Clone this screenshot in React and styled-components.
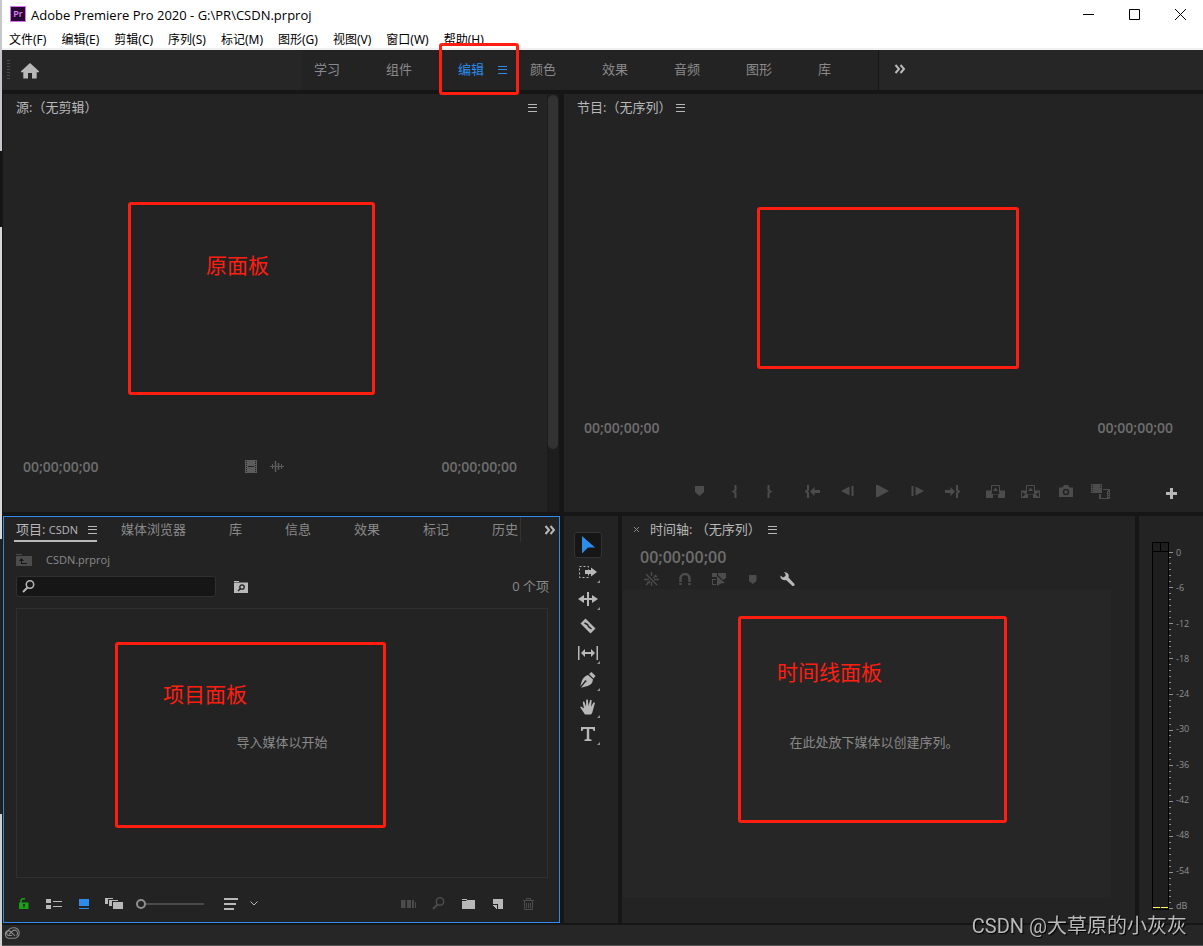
import React from "react";
import styled, { createGlobalStyle, css } from "styled-components";

const c = {
  panel: "#232323",
  seam: "#161616",
  body: "#262626",
  bright: "#b8b8b8",
  mid: "#8a8a8a",
  dim: "#4c4c4c",
  blue: "#2d8ceb",
  red: "#ff1e10",
};

const GlobalStyle = createGlobalStyle`
  * { box-sizing: border-box; }
  body { margin: 0; background: ${c.seam}; font: 13px/16px "Open Sans", "Noto Sans CJK SC", sans-serif; color: ${c.bright}; }
  button { appearance: none; border: 0; padding: 0; margin: 0; background: none; font: inherit; color: inherit; cursor: pointer; }
  svg { display: block; flex: none; }
  h1, h2, p { margin: 0; font-size: inherit; font-weight: inherit; }
`;

/* ---------- window frame ---------- */

const Desktop = styled.div`
  display: flex;
  min-height: 100vh;
`;
const DesktopEdge = styled.div`
  width: 2px;
  flex: none;
  background: linear-gradient(#c4c8cd 0 16%, #141414 16% 24%, #d8d8d8 24% 57%, #202020 57% 86%, #cfcfcf 86%);
`;
const Window = styled.div`
  flex: 1;
  min-width: 0;
  display: flex;
  flex-direction: column;
  background: ${c.seam};
  border-bottom: 1px solid #555;
`;
const TitleBar = styled.header`
  display: flex;
  align-items: center;
  height: 29px;
  padding-left: 8px;
  background: #fff;
  color: #000;
`;
const AppBadge = styled.span`
  width: 16px;
  height: 16px;
  margin: 0 5px 2px 0;
  background: #2a0634;
  border: 1px solid #d873f0;
  color: #e48bf8;
  font-size: 9px;
  font-weight: 600;
  line-height: 13px;
  text-align: center;
`;
const Title = styled.h1`
  flex: 1;
  font-size: 13px;
`;
const WindowButton = styled.button`
  width: 46px;
  height: 29px;
  display: grid;
  place-items: center;
`;
const MenuBar = styled.nav`
  display: flex;
  gap: 15px;
  height: 21px;
  padding: 2px 0 0 7px;
  background: #fff;
  border-bottom: 2px solid #f0f0f0;
  color: #000;
  font-family: "Noto Sans", "Noto Sans CJK SC", sans-serif;
  font-size: 12px;
`;
const MenuItem = styled.button`
  white-space: nowrap;
`;

/* ---------- workspace bar ---------- */

const WorkspaceBar = styled.nav`
  display: flex;
  height: 40px;
  margin-bottom: 4px;
  background: #262626;
`;
const Grip = styled.span`
  width: 3px;
  height: 19px;
  margin: 10px 10px 0 5px;
  background: repeating-linear-gradient(#4a4a4a 0 1px, transparent 1px 3px);
`;
const HomeButton = styled.button`
  width: 20px;
  display: grid;
  place-items: center;
  padding-top: 2px;
`;
const WorkspaceTabs = styled.div`
  display: flex;
  margin-left: 262px;
  padding-left: 12px;
  background: ${c.panel};
  border-right: 1px solid ${c.seam};
`;
const WorkspaceTab = styled.button`
  position: relative;
  display: flex;
  align-items: center;
  gap: 14px;
  width: 72px;
  padding-bottom: 3px;
  color: ${(p) => (p.$active ? c.blue : c.mid)};
  & > svg { margin-top: 2px; }
  &:last-child { width: 60px; }
`;
const OverflowButton = styled.button`
  width: 42px;
  display: grid;
  place-items: center;
  color: ${c.bright};
  padding-bottom: 2px;
`;

/* ---------- panels ---------- */

const Panels = styled.main`
  flex: 1;
  display: grid;
  grid-template-columns: minmax(0, 557fr) minmax(0, 639fr);
  grid-template-rows: minmax(418px, 418fr) minmax(407px, 407fr);
  gap: 4px;
  padding: 0 0 2px 1px;
`;
const Panel = styled.section`
  position: relative;
  display: flex;
  flex-direction: column;
  min-width: 0;
  background: ${c.panel};
  ${(p) => p.$focused && css`border: 1px solid ${c.blue};`}
`;
const ScrollFrame = styled.div`
  display: flex;
  margin-right: 1px;
`;
const SourcePanel = styled(Panel)`
  flex: 1;
`;
const ScrollTrack = styled.div`
  width: 12px;
  padding: 1px;
  background: #1d1d1d;
`;
const ScrollThumb = styled.div`
  height: 85%;
  border-radius: 5px;
  background: #323232;
`;
const PanelHeader = styled.header`
  display: flex;
  align-items: center;
  justify-content: ${(p) => (p.$spread ? "space-between" : "flex-start")};
  gap: 5px;
  height: 28px;
  padding: 0 10px 2px 13px;
`;
const Spacer = styled.div`
  flex: 1;
`;
const TimeRow = styled.div`
  display: flex;
  align-items: center;
  justify-content: space-between;
  height: 20px;
  padding: 0 30px 0 20px;
  margin-bottom: ${(p) => p.$below}px;
`;
const Timecode = styled.span`
  font-size: ${(p) => (p.$large ? 16 : 14)}px;
  font-weight: 600;
  line-height: 20px;
  color: #6e6e6e;
`;
const MediaToggles = styled.div`
  display: flex;
  align-items: center;
  gap: 13px;
  padding: 0 12px 2px 0;
  color: #5c5c5c;
`;
const Transport = styled.div`
  display: flex;
  justify-content: flex-end;
  gap: 8px;
  height: 24px;
  padding-right: 14px;
  margin-bottom: 9px;
  color: ${c.dim};
`;
const TransportGroup = styled.div`
  display: flex;
`;
const TransportButton = styled.button`
  width: 35px;
  display: grid;
  place-items: center;
`;
const AddButton = styled(TransportButton)`
  margin-left: 28px;
  padding-top: 4px;
  color: ${c.bright};
`;
const IconButton = styled.button`
  display: grid;
  place-items: center;
  color: ${(p) => p.$color || "inherit"};
`;

/* ---------- project panel ---------- */

const ProjectTabs = styled.div`
  display: flex;
  height: 25px;
  padding-left: 10px;
  overflow: hidden;
`;
const ProjectTab = styled.button`
  display: flex;
  align-items: center;
  flex: none;
  margin-right: 43px;
  padding-bottom: 2px;
  color: ${c.mid};
  ${(p) => p.$active && css`
    gap: 10px;
    margin-right: 24px;
    padding: 2px 0 0 2px;
    border-bottom: 2px solid ${c.bright};
    color: ${c.bright};
  `}
  ${(p) => p.$last && css`
    margin-right: 0;
    padding-right: 2px;
    border-right: 1px solid #323232;
  `}
`;
const Small = styled.span`
  font-size: 11px;
`;
const TabMore = styled.button`
  margin: 0 3px 0 auto;
  display: grid;
  place-items: center;
`;
const PathRow = styled.div`
  display: flex;
  align-items: center;
  gap: 14px;
  height: 34px;
  padding: 2px 12px 0;
  color: ${c.mid};
`;
const FilterRow = styled.div`
  display: flex;
  align-items: center;
  height: 21px;
  padding: 0 10px 0 12px;
  color: ${c.mid};
`;
const SearchBox = styled.label`
  display: flex;
  align-items: center;
  width: 200px;
  height: 21px;
  margin-right: 18px;
  padding-left: 5px;
  background: #161616;
  border: 1px solid #303030;
  border-radius: 3px;
  color: ${c.bright};
`;
const SearchInput = styled.input`
  flex: 1;
  min-width: 0;
  border: 0;
  outline: 0;
  background: transparent;
  color: ${c.bright};
  font: inherit;
`;
const ItemCount = styled.span`
  margin-left: auto;
  padding-bottom: 2px;
`;
const Bin = styled.div`
  flex: 1;
  display: grid;
  place-items: center;
  margin: 11px 11px 0 12px;
  padding-bottom: 2px;
  border: 1px solid #303030;
  color: ${c.mid};
`;
const ProjectFooter = styled.footer`
  display: flex;
  align-items: center;
  height: 44px;
  padding: 7px 16px 0 5px;
  color: ${c.bright};
`;
const FooterButton = styled.button`
  width: ${(p) => (p.$narrow ? 15 : 30)}px;
  height: 24px;
  display: grid;
  place-items: center;
  color: ${(p) => p.$color || "inherit"};
`;
const ZoomSlider = styled.input`
  appearance: none;
  width: 68px;
  height: 12px;
  margin: 0 12px 0 7px;
  background: linear-gradient(#4a4a4a, #4a4a4a) center / 100% 2px no-repeat;
  &::-webkit-slider-thumb {
    appearance: none;
    width: 10px;
    height: 10px;
    border: 2px solid #8f8f8f;
    border-radius: 50%;
    background: ${c.panel};
  }
`;

/* ---------- tools, timeline, meters ---------- */

const LowerRight = styled.div`
  display: flex;
  gap: 4px;
  min-width: 0;
`;
const ToolPanel = styled(Panel)`
  width: 54px;
  gap: 1px;
  padding: 16px 0 0 10px;
`;
const ToolButton = styled.button`
  position: relative;
  width: 28px;
  height: 26px;
  display: grid;
  place-items: center;
  border: 1px solid ${(p) => (p.$active ? "#333" : "transparent")};
  border-radius: 3px;
  background: ${(p) => (p.$active ? "#161616" : "none")};
  color: ${(p) => (p.$active ? c.blue : c.bright)};
  ${(p) => p.$flyout && css`
    &::after {
      content: "";
      position: absolute;
      right: 1px;
      bottom: 1px;
      border-left: 3px solid transparent;
      border-bottom: 3px solid #909090;
    }
  `}
`;
const TimelinePanel = styled(Panel)`
  flex: 1;
`;
const TimelineTitle = styled.header`
  display: flex;
  align-items: center;
  gap: 7px;
  height: 28px;
  padding: 0 0 2px 7px;
`;
const CloseButton = styled.button`
  width: 14px;
  height: 14px;
  display: grid;
  place-items: center;
  color: ${c.mid};
`;
const TimelineTime = styled.div`
  height: 25px;
  padding: 3px 18px 0;
`;
const TimelineTools = styled.div`
  display: flex;
  height: 20px;
  padding-left: 12px;
  color: ${c.dim};
`;
const TimelineButton = styled.button`
  width: 34px;
  display: grid;
  place-items: center;
  color: ${(p) => (p.$on ? c.bright : "inherit")};
`;
const TimelineBody = styled.div`
  flex: 1;
  display: grid;
  place-items: center;
  margin: 0 24px 25px 1px;
  padding: 0 0 4px 14px;
  background: ${c.body};
  color: ${c.mid};
`;
const MeterPanel = styled(Panel)`
  width: 64px;
  flex-direction: row;
  padding: 26px 0 13px 13px;
`;
const MeterBar = styled.div`
  width: 17px;
  display: flex;
  flex-direction: column;
  border: 1px solid #000;
  background: #1e1e1e;
`;
const ClipLights = styled.div`
  height: 9px;
  border-bottom: 1px solid #000;
  background: linear-gradient(90deg, transparent 7px, #000 7px 8px, transparent 8px);
`;
const MeterFloor = styled.div`
  height: 1px;
  flex: none;
  margin: auto 0 1px;
  background: linear-gradient(90deg, #ffff4a 7px, transparent 7px 8px, #ffff4a 8px);
`;
const MeterTicks = styled.svg`
  width: 5px;
  height: calc(100% - 12px);
  margin-top: 10px;
  overflow: visible;
`;
const MeterLabels = styled.div`
  display: flex;
  flex-direction: column;
  justify-content: space-between;
  padding-left: 2px;
  margin: 5px 0 -2px;
  font-size: 9px;
  line-height: 12px;
  color: #909090;
`;

const StatusBar = styled.footer`
  display: flex;
  align-items: center;
  height: 20px;
  padding: 0 2px 4px;
  background: #262626;
  color: ${c.mid};
`;

/* ---------- red callouts and watermark, over the panels ---------- */

const Callout = styled.div`
  position: absolute;
  z-index: 2;
  top: ${(p) => p.$y}px;
  left: ${(p) => p.$x}px;
  width: ${(p) => p.$w}px;
  height: ${(p) => p.$h}px;
  padding: ${(p) => p.$pad || 0};
  border: 3px solid ${c.red};
  border-radius: 3px;
  color: ${c.red};
  font-size: 21px;
  line-height: 30px;
  pointer-events: none;
`;
const Watermark = styled.div`
  position: fixed;
  z-index: 3;
  right: 16px;
  bottom: 6px;
  font: 20px/28px Roboto, "Noto Sans CJK SC", sans-serif;
  color: #b9b9b9;
  text-shadow: 1px 1px 1px #000;
  white-space: nowrap;
`;

/* ---------- icons ---------- */

const Svg = ({ w, h, children, ...rest }) => (
  <svg width={w} height={h} viewBox={`0 0 ${w} ${h}`} fill="currentColor" aria-hidden="true" {...rest}>
    {children}
  </svg>
);
const Line = ({ d, sw = 1, ...rest }) => <path d={d} fill="none" stroke="currentColor" strokeWidth={sw} {...rest} />;

const MenuIcon = () => <Svg w={9} h={9}><path d="M0 1h9v1H0zM0 4h9v1H0zM0 8h9v1H0z" /></Svg>;
const Chevrons = () => <Svg w={12} h={10}><Line d="M1.5 1 5 5 1.5 9M6.5 1 10 5 6.5 9" sw={2} /></Svg>;
const HomeIcon = () => (
  <Svg w={18} h={16}><path d="M9 0l9 8.2v1h-2.3V15.500H11V10H7v5.500H2.300V9.200H0v-1z" /></Svg>
);
const FilmIcon = () => (
  <Svg w={12} h={13}>
    <path d="M0 0h12v13H0z" />
    <path d="M1 1h1v1H1zM1 3h1v1H1zM1 5h1v1H1zM1 7h1v1H1zM1 9h1v1H1zM1 11h1v1H1zM10 1h1v1h-1zM10 3h1v1h-1zM10 5h1v1h-1zM10 7h1v1h-1zM10 9h1v1h-1zM10 11h1v1h-1zM3 6h6v1H3z" fill={c.panel} />
  </Svg>
);
const WaveIcon = () => (
  <Svg w={14} h={11}><Line d="M0 5.500h14M2.500 3v5M11.500 3v5" /><Line d="M5.500 0v11M8.500 2v7" sw={1.5} /></Svg>
);
const transport = [
  [
    ["添加标记", <Svg w={9} h={10}><path d="M0 0h9v6L4.500 10 0 6z" /></Svg>],
    ["标记入点", <Svg w={6} h={13}><Line d="M3.500 0v5L1.500 6.500l2 1.500v5" sw={2} /></Svg>],
    ["标记出点", <Svg w={6} h={13}><Line d="M1.500 0v5l2 1.500-2 1.500v5" sw={2} /></Svg>],
  ],
  [
    ["转到入点", <Svg w={15} h={13}><Line d="M3 0v5L1 6.500 3 8v5" sw={2} /><path d="M5 6.500 9.500 2v3H15v3H9.500v3z" /></Svg>],
    ["后退一帧", <Svg w={13} h={10}><path d="M0 5l8.500-4.500v9zM10.500 0h2v10h-2z" /></Svg>],
    ["播放", <Svg w={13} h={12}><path d="M0 0h2l11 6-11 6H0z" /></Svg>],
    ["前进一帧", <Svg w={13} h={10}><path d="M13 5L4.500.500v9zM.500 0h2v10h-2z" /></Svg>],
    ["转到出点", <Svg w={15} h={13}><Line d="M12 0v5l2 1.500L12 8v5" sw={2} /><path d="M10 6.500 5.500 2v3H0v3h5.500v3z" /></Svg>],
  ],
  [
    ["提升", <Svg w={19} h={13}><path d="M0 5.500h5V9h9V5.500h5V13h-7V9.500H7V13H0z" /><Line d="M5.500 8.500v-8h8v8" /><path d="M9.500 2.500 12 6H7z" /></Svg>],
    ["提取", <Svg w={19} h={13}><path d="M0 5.500h5V9h9V5.500h5V13h-7V9.500H7V13H0z" /><path d="M1 7l3.500 2.500L1 12zM18 7l-3.500 2.500L18 12z" fill={c.panel} /><Line d="M5.500 8.500v-8h8v8" /><path d="M9.500 2.500 12 6H7z" /></Svg>],
    ["导出帧", <Svg w={14} h={12}><path d="M0 2.500h3.500L5 0h4l1.500 2.500H14V12H0z" /><circle cx="7" cy="7" r="2.500" fill="none" stroke={c.panel} strokeWidth="1.500" /></Svg>],
    ["比较视图", <Svg w={19} h={15}><path d="M0 0h11v9H0z" /><path d="M1 1h1v1H1zM1 3h1v1H1zM1 5h1v1H1zM1 7h1v1H1zM9 1h1v1H9zM9 3h1v1H9z" fill={c.panel} /><path d="M8 10h2v4H8zM12 5h7v10H8v-1h9V6h-5z" /><path d="M16 7h2v7h-2z" /><path d="M17 8h1v1h-1zM17 10h1v1h-1zM17 12h1v1h-1z" fill={c.panel} /></Svg>],
  ],
];
const PlusIcon = () => <Svg w={11} h={11}><path d="M4 0h3v4h4v3H7v4H4V7H0V4h4z" /></Svg>;
const UpFolderIcon = () => (
  <Svg w={16} h={12} color={c.dim}>
    <path d="M0 0h6v1H0zM0 2h16v10H0z" />
    <path d="M5.500 4 8 7H6v2h5v1H5V7H3z" fill="#181818" />
  </Svg>
);
const SearchIcon = ({ color }) => (
  <Svg w={13} h={13} color={color}><circle cx="8" cy="4.500" r="3.700" fill="none" stroke="currentColor" strokeWidth="1.500" /><Line d="M5.500 7.500 1 12" sw={2} /></Svg>
);
const SearchBinIcon = () => (
  <Svg w={14} h={12} color={c.bright}>
    <path d="M0 0h5v1H0zM0 1.500h14V12H0z" />
    <circle cx="8" cy="6" r="2.200" fill="none" stroke={c.panel} strokeWidth="1.300" />
    <path d="M6.500 7.500 4 10" stroke={c.panel} strokeWidth="1.500" />
  </Svg>
);
const LockIcon = () => (
  <Svg w={10} h={11}><path d="M0 4.500h9.500V11H0z" /><Line d="M2 5V3q0-2.200 2.500-2.200H6" sw={1.5} /><path d="M4 6h2v1.500h-.500V9.500h-1V7.500H4z" fill={c.panel} /></Svg>
);
const ListIcon = () => <Svg w={16} h={11}><path d="M0 1h5v4H0zM0 7h5v4H0zM7 3h9v1H7zM7 8h9v1H7z" /></Svg>;
const ThumbIcon = () => <Svg w={10} h={10}><path d="M0 0h10v7H0zM0 9h10v1H0z" /></Svg>;
const FreeformIcon = () => <Svg w={18} h={11}><path d="M0 0h8v1H3v5H0zM4 2h9v1H7v5H4zM8 4h10v7H8z" /></Svg>;
const SortIcon = () => <Svg w={14} h={12}><path d="M0 0h14v2H0zM0 5h12v2H0zM0 10h10v2H0z" /></Svg>;
const DownIcon = () => <Svg w={8} h={5}><Line d="M.500.500 4 4l3.500-3.500" /></Svg>;
const StoryIcon = () => <Svg w={15} h={9}><path d="M0 1h4.500v8H0zM6 1h4v8H6zM11 1h2v8h-2zM14 3h1v6h-1z" /></Svg>;
const FolderIcon = () => <Svg w={13} h={10}><path d="M0 0h5v1H0zM0 2h4l1-1h8v9H0z" /></Svg>;
const NewItemIcon = () => <Svg w={10} h={10}><path d="M0 0h10v10H5V5H0zM0 6h4v4H3V9H2V8H1V7H0z" /></Svg>;
const TrashIcon = () => <Svg w={11} h={12}><Line d="M0 2.500h11M3.500 2V.500h4V2M1.500 3v8.500h8V3M3.500 5v5M5.500 5v5M7.500 5v5" /></Svg>;

const SelectIcon = () => <Svg w={13} h={18}><path d="M0 0l13 11.500H6L0 17.500z" /></Svg>;
const tools = [
  ["选择工具", false, <SelectIcon />],
  ["向前选择轨道工具", true, <Svg w={18} h={12}><Line d="M.500.500h9v11h-9z" strokeDasharray="2 2" /><path d="M6 4h6V1.500L18 6l-6 4.500V8H6z" /></Svg>],
  ["波纹编辑工具", true, <Svg w={20} h={14}><path d="M9 0h2v14H9zM0 7l6-4v3h8V3l6 4-6 4V8H6v3z" /></Svg>],
  ["剃刀工具", false, <Svg w={16} h={16}><path d="M5.500.500.500 5.500l10 10 5-5z" /><path d="M4.500 5l3 1.500 1 2 3 2.500" fill="none" stroke={c.panel} strokeWidth="1.500" /></Svg>],
  ["外滑工具", true, <Svg w={20} h={14}><path d="M0 0h1.500v14H0zM18.500 0H20v14h-1.500zM3 7l4-4v3h6V3l4 4-4 4V8H7v3z" /></Svg>],
  ["钢笔工具", true, <Svg w={16} h={16}><path d="M11.500 0l4 4-2 2.500L9 2zM8 3l5 4.500q-.500 5-5.500 6.500L1 15.800l4.500-5.500a1 1 0 1 0-1-1L.200 14.500 2 8.500Q4 4 8 3z" /></Svg>],
  ["手形工具", true, <Svg w={16} h={16}><path d="M5 15.500 1 9.500Q-.500 7.500 1 7.500l3 2L2.800 3.500q0-1.500 1.400-1L6 7.500 6.200 1q.800-1.500 1.700 0l.600 6L10 1.200q1-1.200 1.700.2L11 7.800l2.500-4.300q1.300-.700 1.400.500L13 11q-.500 3-2 4.500z" /></Svg>],
  ["文字工具", true, <Svg w={14} h={14}><path d="M0 0h14v4h-1.500q0-2-1.500-2H8.200v9.500q0 1 2.300 1V14h-7v-1.500q2.300 0 2.300-1V2H3Q1.500 2 1.500 4H0z" /></Svg>],
];
const timelineTools = [
  ["嵌套序列", false, <Svg w={15} h={14}><Line d="M7.500 0v4M7.500 10v4M0 7.500h5M10 7.500h5M2 2l11 11M12 3 9 6M6 9l-4 4M10 4.500h3M3 10.500h3" sw={1.4} /></Svg>],
  ["对齐", false, <Svg w={12} h={12}><Line d="M1.500 12V5.500a4.500 4.500 0 0 1 9 0V12" sw={2.5} /><path d="M0 9h3v1H0zM9 9h3v1H9z" fill={c.panel} /></Svg>],
  ["链接选择项", false, <Svg w={14} h={13}><path d="M0 0h5v4H0zM6 0h8v5l-3 2-5-5zM0 6h4v1H1v4h3v1H0zM5 3l8 7-4 .500L5 13z" /></Svg>],
  ["添加标记", false, <Svg w={8} h={9}><path d="M0 0h7.500v6L3.750 9 0 6z" /></Svg>],
  ["时间轴显示设置", true, <Svg w={15} h={15}><path d="M4 .3Q7-.3 8.500 2.500 9 4.500 8.500 5.500l6 6.500q.500 2.500-2 2L6 8Q3 9 1 6.500.300 5 .500 3.500L3 5.500 5.500 4 5.500 2z" /></Svg>],
];
const CloudIcon = () => (
  <Svg w={16} h={12}><Line d="M4.500 11.200A4 4 0 0 1 4 3.500Q6 .600 9.500.800A5.200 5.200 0 0 1 10.500 11.200zM12.500 8.500a2.800 2.800 0 1 0-4-4.500L5 7.500M11 8.800 6.500 4.500a2.300 2.300 0 1 0-1.500 4h3" sw={1.1} /></Svg>
);

const menus = ["文件(F)", "编辑(E)", "剪辑(C)", "序列(S)", "标记(M)", "图形(G)", "视图(V)", "窗口(W)", "帮助(H)"];
const workspaces = ["学习", "组件", "编辑", "颜色", "效果", "音频", "图形", "库"];
const projectTabs = ["媒体浏览器", "库", "信息", "效果", "标记", "历史"];
const levels = ["0", "-6", "-12", "-18", "-24", "-30", "-36", "-42", "-48", "-54", "dB"];
const ZERO = "00;00;00;00";

const PanelMenu = () => <IconButton aria-label="面板菜单"><MenuIcon /></IconButton>;

function Source() {
  return (
    <ScrollFrame>
      <SourcePanel>
        <PanelHeader $spread><h2>源:（无剪辑）</h2><PanelMenu /></PanelHeader>
        <Spacer />
        <TimeRow $below={35}>
          <Timecode>{ZERO}</Timecode>
          <MediaToggles>
            <IconButton aria-label="仅拖动视频"><FilmIcon /></IconButton>
            <IconButton aria-label="仅拖动音频"><WaveIcon /></IconButton>
          </MediaToggles>
          <Timecode>{ZERO}</Timecode>
        </TimeRow>
        <Callout $x={125} $y={108} $w={247} $h={193} $pad="45px 0 0 75px">原面板</Callout>
      </SourcePanel>
      <ScrollTrack><ScrollThumb /></ScrollTrack>
    </ScrollFrame>
  );
}

function Program() {
  return (
    <Panel>
      <PanelHeader><h2>节目:（无序列）</h2><PanelMenu /></PanelHeader>
      <Spacer />
      <TimeRow $below={41}>
        <Timecode>{ZERO}</Timecode>
        <Timecode>{ZERO}</Timecode>
      </TimeRow>
      <Transport>
        {transport.map((group, i) => (
          <TransportGroup key={i}>
            {group.map(([name, icon]) => <TransportButton key={name} aria-label={name}>{icon}</TransportButton>)}
          </TransportGroup>
        ))}
        <AddButton aria-label="按钮编辑器"><PlusIcon /></AddButton>
      </Transport>
      <Callout $x={193} $y={113} $w={262} $h={162} />
    </Panel>
  );
}

function Project() {
  return (
    <Panel $focused>
      <ProjectTabs>
        <ProjectTab $active><span>项目: <Small>CSDN</Small></span><MenuIcon /></ProjectTab>
        {projectTabs.map((t, i) => <ProjectTab key={t} $last={i === projectTabs.length - 1}>{t}</ProjectTab>)}
        <TabMore aria-label="更多面板"><Chevrons /></TabMore>
      </ProjectTabs>
      <PathRow><UpFolderIcon /><Small>CSDN.prproj</Small></PathRow>
      <FilterRow>
        <SearchBox><SearchIcon /><SearchInput type="text" aria-label="搜索" /></SearchBox>
        <IconButton aria-label="从查询创建新的搜索素材箱"><SearchBinIcon /></IconButton>
        <ItemCount>0 个项</ItemCount>
      </FilterRow>
      <Bin>导入媒体以开始</Bin>
      <ProjectFooter>
        <FooterButton $color="#18a018" aria-label="项目可写"><LockIcon /></FooterButton>
        <FooterButton aria-label="列表视图"><ListIcon /></FooterButton>
        <FooterButton $color={c.blue} aria-label="图标视图"><ThumbIcon /></FooterButton>
        <FooterButton aria-label="自由变换视图"><FreeformIcon /></FooterButton>
        <ZoomSlider type="range" min="0" max="100" defaultValue="0" aria-label="缩放" />
        <FooterButton aria-label="排序图标"><SortIcon /></FooterButton>
        <FooterButton $narrow aria-label="排序选项"><DownIcon /></FooterButton>
        <Spacer />
        <FooterButton $color={c.dim} aria-label="自动匹配序列"><StoryIcon /></FooterButton>
        <FooterButton $color={c.dim} aria-label="查找"><SearchIcon /></FooterButton>
        <FooterButton aria-label="新建素材箱"><FolderIcon /></FooterButton>
        <FooterButton aria-label="新建项"><NewItemIcon /></FooterButton>
        <FooterButton $color={c.dim} aria-label="清除"><TrashIcon /></FooterButton>
      </ProjectFooter>
      <Callout $x={111} $y={125} $w={271} $h={186} $pad="34px 0 0 45px">项目面板</Callout>
    </Panel>
  );
}

function Timeline() {
  return (
    <TimelinePanel>
      <TimelineTitle>
        <CloseButton aria-label="关闭"><Svg w={5} h={5}><Line d="M0 0l5 5M5 0 0 5" /></Svg></CloseButton>
        <h2>时间轴: （无序列）</h2>
        <PanelMenu />
      </TimelineTitle>
      <TimelineTime><Timecode $large>{ZERO}</Timecode></TimelineTime>
      <TimelineTools>
        {timelineTools.map(([name, on, icon]) => <TimelineButton key={name} $on={on} aria-label={name}>{icon}</TimelineButton>)}
      </TimelineTools>
      <TimelineBody>在此处放下媒体以创建序列。</TimelineBody>
      <Callout $x={116} $y={100} $w={269} $h={207} $pad="38px 0 0 36px">时间线面板</Callout>
    </TimelinePanel>
  );
}

function Meters() {
  return (
    <MeterPanel>
      <MeterBar><ClipLights /><MeterFloor /></MeterBar>
      <MeterTicks stroke="#909090" shapeRendering="crispEdges" aria-hidden="true">
        {Array.from({ length: 61 }, (_, i) => (
          <line key={i} x1="0" x2={i % 6 ? 2 : 4} y1={`${(i / 60) * 100}%`} y2={`${(i / 60) * 100}%`} />
        ))}
      </MeterTicks>
      <MeterLabels>{levels.map((l) => <span key={l}>{l}</span>)}</MeterLabels>
    </MeterPanel>
  );
}

export default function App() {
  return (
    <>
      <GlobalStyle />
      <Desktop>
        <DesktopEdge />
        <Window>
          <TitleBar>
            <AppBadge>Pr</AppBadge>
            <Title>Adobe Premiere Pro 2020 - G:\PR\CSDN.prproj</Title>
            <WindowButton aria-label="最小化"><Svg w={11} h={11}><path d="M0 5h11v1H0z" /></Svg></WindowButton>
            <WindowButton aria-label="最大化"><Svg w={11} h={11}><Line d="M.500.500h10v10H.500z" /></Svg></WindowButton>
            <WindowButton aria-label="关闭窗口"><Svg w={11} h={11}><Line d="M0 0l11 11M11 0 0 11" /></Svg></WindowButton>
          </TitleBar>
          <MenuBar>{menus.map((m) => <MenuItem key={m}>{m}</MenuItem>)}</MenuBar>
          <WorkspaceBar>
            <Grip />
            <HomeButton aria-label="主页"><HomeIcon /></HomeButton>
            <WorkspaceTabs>
              {workspaces.map((w) => (
                <WorkspaceTab key={w} $active={w === "编辑"}>
                  {w}
                  {w === "编辑" && <><MenuIcon /><Callout as="span" $x={-19} $y={-7} $w={80} $h={52} /></>}
                </WorkspaceTab>
              ))}
            </WorkspaceTabs>
            <OverflowButton aria-label="更多工作区"><Chevrons /></OverflowButton>
          </WorkspaceBar>
          <Panels>
            <Source />
            <Program />
            <Project />
            <LowerRight>
              <ToolPanel>
                {tools.map(([name, flyout, icon], i) => (
                  <ToolButton key={name} $active={i === 0} $flyout={flyout} aria-label={name}>{icon}</ToolButton>
                ))}
              </ToolPanel>
              <Timeline />
              <Meters />
            </LowerRight>
          </Panels>
          <StatusBar><CloudIcon /></StatusBar>
        </Window>
      </Desktop>
      <Watermark>CSDN @大草原的小灰灰</Watermark>
    </>
  );
}
